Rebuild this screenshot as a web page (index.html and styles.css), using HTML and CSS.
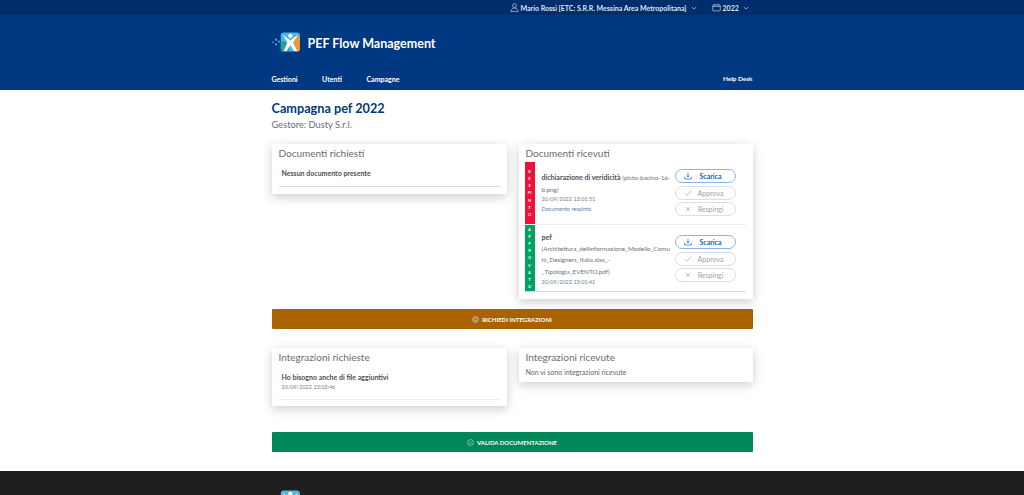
FILE: index.html

```html
<!DOCTYPE html>
<html lang="it">
<head>
    <meta charset="UTF-8">
    <title>PEF Flow Management</title>
    <link rel="stylesheet" href="styles.css">
</head>
<body>

    <!-- Top bar -->
    <div class="slim-bar">
        <div class="wrap slim-inner">
            <span class="slim-item">
                <svg class="slim-icon" viewBox="0 0 12 12"><circle cx="6" cy="3.6" r="2.6"/><path d="M1.2 11.5c.4-3 2-4.6 4.8-4.6s4.4 1.600 4.800 4.600z"/></svg>
                Mario Rossi [ETC: S.R.R. Messina Area Metropolitana]
                <svg class="slim-caret" viewBox="0 0 8 5"><path d="M1 1l3 3 3-3"/></svg>
            </span>
            <span class="slim-item year">
                <svg class="slim-icon cal" viewBox="0 0 12 12"><rect x="1" y="2.500" width="10" height="8" rx="1"/><path d="M1 4.500h10M3.500 1v2M8.500 1v2"/></svg>
                2022
                <svg class="slim-caret" viewBox="0 0 8 5"><path d="M1 1l3 3 3-3"/></svg>
            </span>
        </div>
    </div>

    <!-- Header -->
    <header class="header">
        <div class="wrap brand">
            <svg class="logo" viewBox="0 0 30 22">
                <g fill="#5aa9d6"><rect x="0" y="10" width="1.500" height="1.500"/><rect x="3" y="7" width="2" height="2"/><rect x="3" y="12" width="2" height="2"/><rect x="6" y="9" width="2" height="2"/></g>
                <rect x="9" y="0.500" width="20" height="20" rx="3" fill="#4fb3e8"/>
                <path d="M9 10h5l5 10.500H12a3 3 0 0 1-3-3z" fill="#1fa58f"/>
                <path d="M23 5h6v12.500a3 3 0 0 1-3 3h-2z" fill="#f59a23"/>
                <path d="M11 3l8 6 8-6-5 8 4 9h-3l-4-6-4 6h-3l4-9z" fill="#fff"/>
                <circle cx="19" cy="4" r="2.200" fill="#fff"/>
            </svg>
            <span class="brand-name">PEF Flow Management</span>
        </div>
        <nav class="wrap nav">
            <a>Gestioni</a>
            <a>Utenti</a>
            <a>Campagne</a>
            <a class="nav-right">Help Desk</a>
        </nav>
    </header>

    <main class="wrap main">
        <h1>Campagna pef 2022</h1>
        <p class="subtitle">Gestore: Dusty S.r.l.</p>

        <div class="columns">
            <section class="card">
                <h2>Documenti richiesti</h2>
                <div class="plain-row">
                    <b>Nessun documento presente</b>
                </div>
            </section>

            <section class="card">
                <h2>Documenti ricevuti</h2>

                <div class="doc first">
                    <div class="doc-status red">RESPINTO</div>
                    <div class="doc-text">
                        <p><b>dichiarazione di veridicità</b> <span class="file">(picto-bacino-16-b.png)</span></p>
                        <small>20/09/2022 13:01:51</small>
                        <small class="note">Documento respinto</small>
                    </div>
                    <div class="doc-actions">
                        <a class="pill primary"><svg viewBox="0 0 12 12"><path d="M1 7v3.500h10V7M6 1v6.500M3.800 5.300 6 7.500l2.200-2.200"/></svg><span>Scarica</span></a>
                        <a class="pill"><svg viewBox="0 0 12 12"><path d="M1.500 6.500 4.500 9.500 10.500 3"/></svg><span>Approva</span></a>
                        <a class="pill"><svg viewBox="0 0 12 12"><path d="M3 3l6 6M9 3l-6 6"/></svg><span>Respingi</span></a>
                    </div>
                </div>

                <div class="doc last">
                    <div class="doc-status green">APPROVATO</div>
                    <div class="doc-text">
                        <p><b>pef</b><br><span class="file">(Architettura_dellinformazione_Modello_Comuni_Designers_Italia.xlsx_-_Tipologia_EVENTO.pdf)</span></p>
                        <small>20/09/2022 13:01:41</small>
                    </div>
                    <div class="doc-actions">
                        <a class="pill primary"><svg viewBox="0 0 12 12"><path d="M1 7v3.500h10V7M6 1v6.500M3.800 5.300 6 7.500l2.200-2.200"/></svg><span>Scarica</span></a>
                        <a class="pill"><svg viewBox="0 0 12 12"><path d="M1.500 6.500 4.500 9.500 10.500 3"/></svg><span>Approva</span></a>
                        <a class="pill"><svg viewBox="0 0 12 12"><path d="M3 3l6 6M9 3l-6 6"/></svg><span>Respingi</span></a>
                    </div>
                </div>
            </section>
        </div>

        <a class="wide-btn orange">
            <svg viewBox="0 0 12 12"><circle cx="6" cy="6" r="5"/><circle cx="6" cy="6" r="2.500"/></svg>
            RICHIEDI INTEGRAZIONI
        </a>

        <div class="columns second">
            <section class="card tall-card">
                <h2>Integrazioni richieste</h2>
                <div class="plain-row tall">
                    <b>Ho bisogno anche di file aggiuntivi</b>
                    <small>20/09/2022 13:03:46</small>
                </div>
            </section>
            <section class="card short">
                <h2>Integrazioni ricevute</h2>
                <p class="empty">Non vi sono integrazioni ricevute</p>
            </section>
        </div>

        <a class="wide-btn green-btn">
            <svg viewBox="0 0 12 12"><circle cx="6" cy="6" r="5"/><path d="M3.500 6.200 5.300 8l3.200-3.500"/></svg>
            VALIDA DOCUMENTAZIONE
        </a>
    </main>

    <footer class="footer">
        <div class="wrap">
            <svg class="logo" viewBox="0 0 30 22">
                <rect x="9" y="0.500" width="20" height="20" rx="3" fill="#4fb3e8"/>
                <path d="M11 3l8 6 8-6-5 8 4 9h-3l-4-6-4 6h-3l4-9z" fill="#fff"/>
                <circle cx="19" cy="4" r="2.200" fill="#fff"/>
            </svg>
        </div>
    </footer>

</body>
</html>
```

FILE: styles.css

```css
/* General Styles */
html, body {
    height: 495px;
    overflow: hidden;
}

body {
    margin: 0;
    font-family: 'Lato', 'Open Sans', sans-serif;
    color: #5c6f82;
    background: #fff;
}

.wrap {
    width: 481px;
    margin: 0 auto;
}

a {
    text-decoration: none;
}

/* Top bar */
.slim-bar {
    height: 15px;
    background: #002d6b;
    color: #dfe6f0;
    font-size: 7px;
    font-weight: 700;
}

.slim-inner {
    display: flex;
    align-items: center;
    height: 15px;
    padding-left: 238px;
    box-sizing: border-box;
}

.slim-item {
    display: flex;
    align-items: center;
    white-space: nowrap;
}

.year {
    margin-left: 15px;
}

.slim-icon {
    width: 9px;
    height: 9px;
    margin-right: 2px;
    fill: none;
    stroke: #b9c7dc;
    stroke-width: 1;
}

.slim-caret {
    width: 6px;
    height: 4px;
    margin-left: 4px;
    fill: none;
    stroke: #b9c7dc;
    stroke-width: 1;
}

/* Header */
.header {
    height: 75px;
    background: #003882;
    color: #fff;
}

.brand {
    display: flex;
    align-items: center;
    padding-top: 16px;
    height: 22px;
}

.logo {
    width: 29px;
    height: 21px;
}

.brand-name {
    margin-left: 7px;
    padding-top: 2px;
    font-size: 12.500px;
    font-weight: 700;
}

.nav {
    display: flex;
    margin-top: 22px;
    font-size: 7px;
    font-weight: 700;
    gap: 24.500px;
}

.nav-right {
    margin-left: auto;
    font-size: 6.400px;
}

/* Page content */
h1 {
    margin: 0;
    padding-top: 11px;
    font-size: 12.700px;
    line-height: 15px;
    font-weight: 700;
    color: #003a78;
}

.subtitle {
    margin: 2px 0 0;
    font-size: 9.300px;
    line-height: 13px;
    color: #666e75;
}

.columns {
    display: grid;
    grid-template-columns: 235px 234px;
    column-gap: 12px;
    align-items: start;
    margin-top: 13px;
}

.second {
    margin-top: 19px;
}

.card {
    padding: 0 7px 7px;
    background: #fff;
    box-shadow: 0 3px 10px rgba(0, 0, 0, 0.2);
}

.tall-card {
    padding-bottom: 6px;
}

.card h2 {
    margin: 0;
    padding-top: 3px;
    font-size: 10px;
    line-height: 13px;
    font-weight: 400;
    color: #666e75;
}

.plain-row {
    height: 27px;
    padding: 9px 3px 0;
    box-sizing: border-box;
    border-bottom: 1px solid #d9dadb;
    font-size: 7px;
    color: #4a4f55;
}

.plain-row b {
    font-weight: 700;
}

.tall {
    height: 36px;
    padding-top: 8px;
    border-bottom-color: #eceef0;
}

.tall b {
    display: block;
    line-height: 11px;
}

small {
    display: block;
    font-size: 5.500px;
    line-height: 9.500px;
    color: #6e7f90;
}

.empty {
    margin: 3px 0 0;
    font-size: 7px;
    line-height: 10px;
    color: #5b6670;
}

.short {
    padding-bottom: 5px;
}

/* Document rows */
.doc {
    display: flex;
    height: 63px;
    margin-left: -1px;
    box-sizing: border-box;
    border-bottom: 1px solid #eceef0;
}

.doc.first {
    margin-top: 2px;
}

.doc.last {
    height: 67px;
    border-bottom-color: #d9dadb;
}

.doc-status {
    width: 10px;
    flex-shrink: 0;
    padding: 0 3px;
    box-sizing: border-box;
    display: flex;
    flex-direction: column;
    align-items: center;
    justify-content: center;
    color: #fff;
    font-size: 4px;
    font-weight: 700;
    line-height: 7.200px;
    word-break: break-all;
    text-align: center;
}

.red {
    background: #f0113a;
}

.green {
    background: #00a25f;
}

.doc-text {
    width: 137px;
    flex-shrink: 0;
    padding: 10px 0 0 7px;
    box-sizing: border-box;
    overflow-wrap: anywhere;
}

.doc.last .doc-text {
    padding-top: 7px;
}

.doc-text p {
    margin: 0;
    font-size: 7px;
    line-height: 10.700px;
}

.doc-text b {
    font-weight: 700;
    color: #4a4f55;
}

.file {
    font-size: 6.300px;
    color: #6b7176;
}

.note {
    color: #5f7f9f;
}

.doc-actions {
    display: flex;
    flex-direction: column;
    gap: 2.500px;
    padding: 7px 0 0 3px;
}

.doc.last .doc-actions {
    padding-top: 10px;
}

.pill {
    display: flex;
    align-items: center;
    width: 61px;
    height: 14px;
    box-sizing: border-box;
    padding-left: 8px;
    border: 1px solid #d9dee3;
    border-radius: 7px;
    font-size: 7px;
    color: #9aa3aa;
}

.pill svg {
    width: 8px;
    height: 8px;
    fill: none;
    stroke: #9aa3aa;
    stroke-width: 1;
}

.pill span {
    flex: 1;
    text-align: center;
    padding-right: 5px;
}

.pill.primary {
    border-color: #8db4e0;
    color: #0b5fc0;
    font-weight: 700;
}

.pill.primary svg {
    stroke: #0b5fc0;
}

/* Wide buttons */
.wide-btn {
    display: flex;
    align-items: center;
    justify-content: center;
    gap: 3px;
    height: 20px;
    margin-top: 10px;
    border-radius: 1px;
    color: #fff;
    font-size: 6px;
    font-weight: 700;
}

.wide-btn svg {
    width: 7px;
    height: 7px;
    fill: none;
    stroke: #e4e4e4;
    stroke-width: 1;
}

.orange {
    background: #a86300;
}

.green-btn {
    margin-top: 26px;
    background: #008758;
}

/* Footer */
.footer {
    height: 60px;
    margin-top: 19px;
    padding-top: 19px;
    box-sizing: border-box;
    background: #1f1f1f;
}
```
